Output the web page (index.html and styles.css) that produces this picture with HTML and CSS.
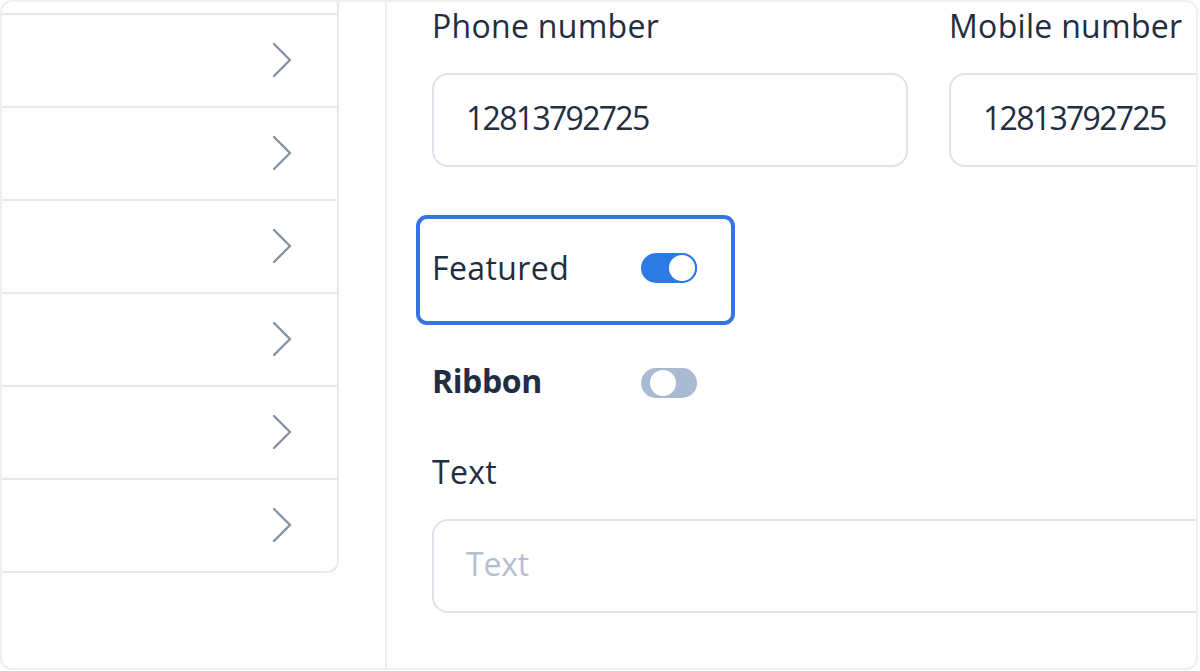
FILE: index.html
```html
<!DOCTYPE html>
<html lang="en">
<head>
<meta charset="utf-8">
<title>Listing settings</title>
<link rel="stylesheet" href="styles.css">
</head>
<body>
<div class="frame">
  <aside class="side">
    <div class="card">
      <div class="item"><svg class="chev" viewBox="0 0 20 36"><path d="M2 2 L18 18 L2 34"/></svg></div>
      <div class="item"><svg class="chev" viewBox="0 0 20 36"><path d="M2 2 L18 18 L2 34"/></svg></div>
      <div class="item"><svg class="chev" viewBox="0 0 20 36"><path d="M2 2 L18 18 L2 34"/></svg></div>
      <div class="item"><svg class="chev" viewBox="0 0 20 36"><path d="M2 2 L18 18 L2 34"/></svg></div>
      <div class="item"><svg class="chev" viewBox="0 0 20 36"><path d="M2 2 L18 18 L2 34"/></svg></div>
      <div class="item"><svg class="chev" viewBox="0 0 20 36"><path d="M2 2 L18 18 L2 34"/></svg></div>
      <div class="item"><svg class="chev" viewBox="0 0 20 36"><path d="M2 2 L18 18 L2 34"/></svg></div>
    </div>
  </aside>
  <main class="panel">
    <div class="pair">
      <div class="field">
        <div class="label">Phone number</div>
        <div class="input">12813792725</div>
      </div>
      <div class="field">
        <div class="label">Mobile number</div>
        <div class="input">12813792725</div>
      </div>
    </div>
    <div class="switch-row highlight">
      <span class="switch-label">Featured</span>
      <span class="toggle on"></span>
    </div>
    <div class="switch-row">
      <span class="switch-label bold">Ribbon</span>
      <span class="toggle off"></span>
    </div>
    <div class="field wide">
      <div class="label">Text</div>
      <div class="input placeholder">Text</div>
    </div>
  </main>
</div>
</body>
</html>
```
FILE: styles.css
```css
html, body {
  margin: 0;
  padding: 0;
  background: #ffffff;
}
body {
  font-family: "Open Sans", "Noto Sans", sans-serif;
  color: #222d3f;
}
.frame {
  width: 1198px;
  height: 670px;
  box-sizing: border-box;
  border: 2px solid #eeeff5;
  border-radius: 12px;
  overflow: hidden;
  display: flex;
  background: #ffffff;
}
.side {
  flex: none;
  width: 385px;
  box-sizing: border-box;
  border-right: 2px solid #eceef3;
  padding-right: 46px;
}
.card {
  margin-top: -80px;
  border-right: 2px solid #e6e9ee;
  border-bottom: 2px solid #e6e9ee;
  border-radius: 0 0 12px 0;
}
.item {
  height: 91px;
  display: flex;
  align-items: center;
  justify-content: flex-end;
  padding-right: 45px;
  border-bottom: 2px solid #e6e9ee;
}
.item:last-child {
  border-bottom: none;
}
.chev {
  width: 20px;
  height: 36px;
  margin-top: -2px;
}
.chev path {
  fill: none;
  stroke: #8592a6;
  stroke-width: 2.4;
  stroke-linecap: round;
  stroke-linejoin: round;
}
.panel {
  flex: 1;
  min-width: 0;
  padding: 4px 0 0 45px;
  display: flex;
  flex-direction: column;
}
.pair {
  display: grid;
  grid-template-columns: 476px 476px;
  column-gap: 41px;
}
.field {
  display: flex;
  flex-direction: column;
}
.field.wide {
  width: 993px;
  margin-top: 51px;
}
.label {
  font-size: 32px;
  line-height: 40px;
  margin-bottom: 27px;
  white-space: nowrap;
  letter-spacing: 0.3px;
}
.input {
  height: 94px;
  box-sizing: border-box;
  border: 2px solid #dfe3e9;
  border-radius: 16px;
  padding: 23px 33px 27px 32px;
  font-size: 32px;
  line-height: 40px;
  letter-spacing: -1.7px;
  color: #222d3f;
}
.input.placeholder {
  color: #b3bfcf;
  letter-spacing: -0.2px;
}
.switch-row {
  display: flex;
  align-items: center;
  height: 40px;
}
.switch-label {
  width: 209px;
  font-size: 32px;
  line-height: 40px;
  letter-spacing: 0.4px;
}
.switch-label.bold {
  font-weight: 700;
  letter-spacing: -0.4px;
}
.highlight {
  width: 319px;
  height: 110px;
  box-sizing: border-box;
  margin: 48px 0 36px -16px;
  padding: 0 0 4px 12px;
  border: 4px solid #3574e4;
  border-radius: 11px;
}
.toggle {
  position: relative;
  width: 56px;
  height: 30px;
  border-radius: 15px;
  flex: none;
}
.toggle.on {
  background: #2c7be5;
}
.toggle.on::after {
  content: "";
  position: absolute;
  right: 0;
  top: 0;
  width: 30px;
  height: 30px;
  box-sizing: border-box;
  border: 2px solid #2c7be5;
  border-radius: 50%;
  background: #ffffff;
}
.toggle.off {
  background: #a9bad3;
  margin-top: 4px;
}
.toggle.off::after {
  content: "";
  position: absolute;
  left: 9px;
  top: 2px;
  width: 26px;
  height: 26px;
  border-radius: 50%;
  background: #ffffff;
}
```
